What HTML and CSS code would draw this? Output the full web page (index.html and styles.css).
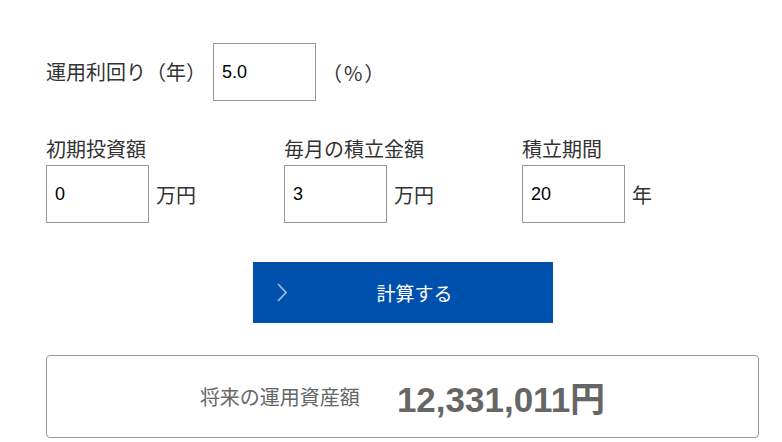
FILE: index.html
```html
<!DOCTYPE html>
<html lang="ja">
<head>
    <meta charset="UTF-8">
    <meta name="viewport" content="width=device-width, initial-scale=1.0">
    <title>積立シミュレーション</title>
    <link rel="stylesheet" href="styles.css">
</head>
<body>
    <div class="container">
        <div class="rate-row">
            <label class="label" for="rate">運用利回り（年）</label>
            <input type="text" id="rate" class="num-input" value="5.0">
            <span class="unit unit-rate">（%）</span>
        </div>

        <div class="field-row">
            <div class="field">
                <label class="label" for="initial">初期投資額</label>
                <div class="field-input">
                    <input type="text" id="initial" class="num-input" value="0">
                    <span class="unit">万円</span>
                </div>
            </div>
            <div class="field">
                <label class="label" for="monthly">毎月の積立金額</label>
                <div class="field-input">
                    <input type="text" id="monthly" class="num-input" value="3">
                    <span class="unit">万円</span>
                </div>
            </div>
            <div class="field">
                <label class="label" for="years">積立期間</label>
                <div class="field-input">
                    <input type="text" id="years" class="num-input" value="20">
                    <span class="unit">年</span>
                </div>
            </div>
        </div>

        <div class="button-row">
            <button class="calc-button" onclick="calculate()">
                <svg class="arrow" width="10" height="19" viewBox="0 0 10 19">
                    <polyline points="1,1 9,9.5 1,18" fill="none" stroke="currentColor" stroke-width="1.8"/>
                </svg>
                計算する
            </button>
        </div>

        <div class="result-box">
            <span class="result-label">将来の運用資産額</span>
            <span class="result-value" id="result">12,331,011円</span>
        </div>
    </div>

    <script>
        function calculate() {
            const rate = parseFloat(document.getElementById("rate").value) / 100 / 12;
            const initial = parseFloat(document.getElementById("initial").value) * 10000;
            const monthly = parseFloat(document.getElementById("monthly").value) * 10000;
            const months = parseFloat(document.getElementById("years").value) * 12;

            let total;
            if (rate === 0) {
                total = initial + monthly * months;
            } else {
                const growth = Math.pow(1 + rate, months);
                total = initial * growth + monthly * (growth - 1) / rate;
            }
            document.getElementById("result").textContent = Math.round(total).toLocaleString() + "円";
        }
    </script>
</body>
</html>
```

FILE: styles.css
```css
body {
    font-family: "Noto Sans CJK JP", sans-serif;
    margin: 0;
    color: #333;
    background-color: #fff;
}
.container {
    width: 713px;
    margin-left: 46px;
    padding-top: 43px;
}
.label {
    font-size: 20px;
    line-height: 30px;
    color: #333;
}
.rate-row {
    display: flex;
    align-items: center;
}
.rate-row .label {
    margin-right: 7px;
}
.num-input {
    box-sizing: border-box;
    width: 103px;
    height: 58px;
    padding: 0 8px;
    border: 1px solid #999;
    border-radius: 0;
    font-family: "Liberation Sans", Arial, sans-serif;
    font-size: 18px;
    color: #000;
    outline: none;
}
.unit {
    font-size: 20px;
    color: #333;
    margin-left: 7px;
}
.unit-rate {
    margin-left: 6px;
    letter-spacing: 2px;
}
.field-row {
    display: flex;
    margin-top: 33px;
}
.field {
    width: 238px;
    display: flex;
    flex-direction: column;
}
.field:last-child {
    width: auto;
}
.field .label {
    margin-bottom: 1px;
}
.field-input {
    display: flex;
    align-items: center;
}
.button-row {
    display: flex;
    justify-content: center;
    margin-top: 39px;
}
.calc-button {
    position: relative;
    width: 300px;
    height: 61px;
    padding: 0 0 0 24px;
    border: none;
    background-color: #0051ad;
    color: #fff;
    font-family: "Noto Sans CJK JP", sans-serif;
    font-size: 19px;
    cursor: pointer;
}
.calc-button:hover {
    background-color: #00448f;
}
.arrow {
    position: absolute;
    left: 24px;
    top: 21px;
    color: rgba(255, 255, 255, 0.6);
}
.result-box {
    box-sizing: border-box;
    height: 83px;
    margin-top: 32px;
    border: 1px solid #999;
    border-radius: 4px;
    display: flex;
    justify-content: center;
    align-items: center;
    gap: 37px;
    color: #666;
}
.result-label {
    font-size: 20px;
}
.result-value {
    font-family: "Liberation Sans", "Noto Sans CJK JP", sans-serif;
    font-size: 35px;
    font-weight: bold;
}
```
